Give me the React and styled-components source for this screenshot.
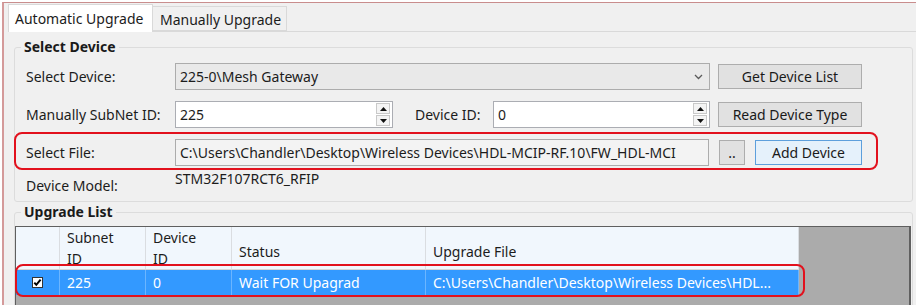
import React from 'react';
import styled, { createGlobalStyle } from 'styled-components';

const Global = createGlobalStyle`
  html, body { margin: 0; padding: 0; background: #ffffff; }
  body { font-family: "Noto Sans", "Open Sans", sans-serif; font-size: 14px; color: #1c1c1c; }
  * { box-sizing: border-box; }
`;

const Window = styled.div`
  width: 916px;
  height: 305px;
  overflow: hidden;
  padding: 2px 0 0 2px;
  background: #ffffff;
`;

const Frame = styled.div`
  height: 100%;
  border-top: 1px solid #c98d8d;
  border-left: 2px solid #d49a9a;
  background: #f0f0f0;
  display: flex;
  flex-direction: column;
`;

const TabStrip = styled.div`
  height: 28px;
  flex-shrink: 0;
  display: flex;
  align-items: flex-end;
  padding-left: 4px;
`;

const Tab = styled.div`
  position: relative;
  z-index: ${p => (p.$active ? 2 : 1)};
  width: ${p => p.$w}px;
  height: ${p => (p.$active ? 28 : 25)}px;
  margin-bottom: ${p => (p.$active ? -1 : 0)}px;
  background: ${p => (p.$active ? '#ffffff' : '#f0f0f0')};
  border: 1px solid #d9d9d9;
  border-bottom: ${p => (p.$active ? 'none' : '1px solid #d9d9d9')};
  border-left: ${p => (p.$active ? '1px solid #d9d9d9' : 'none')};
  display: flex;
  align-items: center;
  padding-left: ${p => (p.$active ? 6 : 7)}px;
  padding-top: ${p => (p.$active ? 0 : 1)}px;
  white-space: nowrap;
`;

const Panel = styled.div`
  flex: 1;
  margin-left: 6px;
  border-top: 1px solid #d9d9d9;
  background: #f0f0f0;
  padding: 6px 3px 0 4px;
`;

const Group = styled.fieldset`
  margin: ${p => p.$mt || 0}px 0 0 0;
  min-width: 0;
  width: 899px;
  height: ${p => p.$h}px;
  border: 1px solid #dcdcdc;
  border-radius: 3px;
  padding: ${p => p.$pad};
`;

const GroupTitle = styled.legend`
  font-weight: 700;
  font-size: 14px;
  line-height: 18px;
  padding: 0 3px;
  margin-left: ${p => p.$ml}px;
  color: #1a1a1a;
`;

const Row = styled.div`
  position: relative;
  display: flex;
  align-items: ${p => p.$align || 'center'};
  height: ${p => p.$h || 27}px;
  margin-top: ${p => p.$mt || 0}px;
`;

const Label = styled.div`
  width: ${p => p.$w || 149}px;
  flex-shrink: 0;
  margin-left: ${p => p.$ml || 0}px;
  line-height: 18px;
  white-space: nowrap;
  align-self: ${p => p.$self || 'auto'};
`;

const Value = styled.div`
  line-height: 16px;
  white-space: nowrap;
  align-self: flex-start;
`;

const Combo = styled.div`
  width: ${p => p.$w}px;
  height: 27px;
  flex-shrink: 0;
  border: 1px solid #acacac;
  background: #e9e9e9;
  display: flex;
  align-items: center;
  justify-content: space-between;
  padding: 0 6px 0 4px;
  white-space: nowrap;
`;

const TextBox = styled.div`
  width: ${p => p.$w}px;
  height: 27px;
  flex-shrink: 0;
  border: 1px solid #acacac;
  background: ${p => (p.$readonly ? '#f3f3f3' : '#ffffff')};
  display: flex;
  align-items: center;
  padding-left: 4px;
  white-space: nowrap;
  overflow: hidden;
`;

const SpinBox = styled.div`
  width: ${p => p.$w}px;
  height: 27px;
  flex-shrink: 0;
  border: 1px solid #abadb3;
  background: #ffffff;
  display: flex;
  align-items: center;
  padding: 1px 2px 1px 4px;
`;

const SpinText = styled.div`
  flex: 1;
`;

const SpinButtons = styled.div`
  width: 14px;
  height: 100%;
  display: flex;
  flex-direction: column;
  gap: 1px;
`;

const SpinArrow = styled.div`
  flex: 1;
  border: 1px solid #c9c9c9;
  background: #f4f4f4;
  display: flex;
  align-items: center;
  justify-content: center;
`;

const Button = styled.div`
  width: ${p => p.$w}px;
  height: 25px;
  flex-shrink: 0;
  margin-left: ${p => p.$ml || 0}px;
  border: 1px solid ${p => (p.$focused ? '#5d9fdc' : '#adadad')};
  background: ${p => (p.$focused ? '#e5f1fb' : '#e1e1e1')};
  display: flex;
  align-items: center;
  justify-content: center;
  white-space: nowrap;
  color: #1a1a1a;
`;

const Callout = styled.div`
  position: absolute;
  top: ${p => p.$t}px;
  left: ${p => p.$l}px;
  right: ${p => p.$r}px;
  bottom: ${p => p.$b}px;
  border: 2.5px solid #e2111d;
  border-radius: 8px;
  pointer-events: none;
  z-index: 5;
`;

const Grid = styled.div`
  height: 120px;
  border: 1px solid #5f5f5f;
  border-right-width: 2px;
  background: #ababab;
`;

const HeaderRow = styled.div`
  display: flex;
  width: max-content;
`;

const HeaderCell = styled.div`
  width: ${p => p.$w}px;
  height: 43px;
  flex-shrink: 0;
  background: #f1f7fd;
  border-right: 1px solid #dadde1;
  border-bottom: 1px solid #d5d5d5;
  display: flex;
  align-items: flex-start;
  padding-left: 7px;
  overflow: hidden;
`;

const HeaderText = styled.div`
  line-height: 21px;
  height: ${p => (p.$wrap ? 38 : 21)}px;
  overflow: hidden;
  width: ${p => (p.$wrap ? '60px' : 'auto')};
  margin-top: ${p => (p.$wrap ? 0 : 14)}px;
  white-space: ${p => (p.$wrap ? 'normal' : 'nowrap')};
`;

const DataRow = styled.div`
  position: relative;
  display: flex;
  width: max-content;
  height: 25px;
`;

const DataCell = styled.div`
  width: ${p => p.$w}px;
  flex-shrink: 0;
  background: #3399ff;
  color: #ffffff;
  border-right: 1px solid rgba(255, 255, 255, 0.28);
  padding-left: ${p => (p.$center ? 0 : 7)}px;
  display: flex;
  align-items: center;
  justify-content: ${p => (p.$center ? 'center' : 'flex-start')};
  white-space: nowrap;
  overflow: hidden;
`;

const Chevron = () => (
  <svg width="9" height="6" viewBox="0 0 9 6">
    <polyline points="1,1 4.5,4.5 8,1" fill="none" stroke="#5a5a5a" strokeWidth="1.3" />
  </svg>
);

const Tri = ({ up }) => (
  <svg width="7" height="4" viewBox="0 0 7 4">
    <polygon points={up ? '0,4 3.5,0 7,4' : '0,0 3.5,4 7,0'} fill="#111" />
  </svg>
);

const Check = () => (
  <svg width="11" height="11" viewBox="0 0 11 11">
    <rect x="0.5" y="0.5" width="10" height="10" fill="#ffffff" stroke="#333" />
    <polyline points="2.3,5.6 4.3,7.8 8.6,2.6" fill="none" stroke="#000" strokeWidth="2" />
  </svg>
);

const Spin = ({ w, value }) => (
  <SpinBox $w={w}>
    <SpinText>{value}</SpinText>
    <SpinButtons>
      <SpinArrow><Tri up /></SpinArrow>
      <SpinArrow><Tri /></SpinArrow>
    </SpinButtons>
  </SpinBox>
);

const cols = [44, 86, 86, 194, 373];

export default function App() {
  return (
    <>
      <Global />
      <Window>
        <Frame>
          <TabStrip>
            <Tab $active $w={145}>Automatic Upgrade</Tab>
            <Tab $w={134}>Manually Upgrade</Tab>
          </TabStrip>
          <Panel>
            <Group $h={164} $pad="7px 0 0 11px">
              <GroupTitle $ml={-5}>Select Device</GroupTitle>
              <Row>
                <Label>Select Device:</Label>
                <Combo $w={535}>
                  <span>225-0\Mesh Gateway</span>
                  <Chevron />
                </Combo>
                <Button $w={144} $ml={8}>Get Device List</Button>
              </Row>
              <Row $mt={11}>
                <Label>Manually SubNet ID:</Label>
                <Spin w={218} value="225" />
                <Label $w={78} $ml={22}>Device ID:</Label>
                <Spin w={217} value="0" />
                <Button $w={144} $ml={8}>Read Device Type</Button>
              </Row>
              <Row $mt={11}>
                <Label>Select File:</Label>
                <TextBox $w={534} $readonly>
                  C:\Users\Chandler\Desktop\Wireless Devices\HDL-MCIP-RF.10\FW_HDL-MCI
                </TextBox>
                <Button $w={26} $ml={10}>..</Button>
                <Button $w={107} $ml={10} $focused>Add Device</Button>
                <Callout $t={-7} $l={-12} $r={34} $b={-4} />
              </Row>
              <Row $mt={5} $h={24}>
                <Label $self="flex-end">Device Model:</Label>
                <Value>STM32F107RCT6_RFIP</Value>
              </Row>
            </Group>
            <Group $mt={1} $h={140} $pad="5px 1px 0 0">
              <GroupTitle $ml={6}>Upgrade List</GroupTitle>
              <Grid>
                <HeaderRow>
                  <HeaderCell $w={cols[0]} />
                  <HeaderCell $w={cols[1]}><HeaderText $wrap>Subnet ID</HeaderText></HeaderCell>
                  <HeaderCell $w={cols[2]}><HeaderText $wrap>Device ID</HeaderText></HeaderCell>
                  <HeaderCell $w={cols[3]}><HeaderText>Status</HeaderText></HeaderCell>
                  <HeaderCell $w={cols[4]}><HeaderText>Upgrade File</HeaderText></HeaderCell>
                </HeaderRow>
                <DataRow>
                  <DataCell $w={cols[0]} $center><Check /></DataCell>
                  <DataCell $w={cols[1]}>225</DataCell>
                  <DataCell $w={cols[2]}>0</DataCell>
                  <DataCell $w={cols[3]}>Wait FOR Upagrad</DataCell>
                  <DataCell $w={cols[4]}>C:\Users\Chandler\Desktop\Wireless Devices\HDL...</DataCell>
                  <Callout $t={-6} $l={-1} $r={-6} $b={-2} />
                </DataRow>
              </Grid>
            </Group>
          </Panel>
        </Frame>
      </Window>
    </>
  );
}
